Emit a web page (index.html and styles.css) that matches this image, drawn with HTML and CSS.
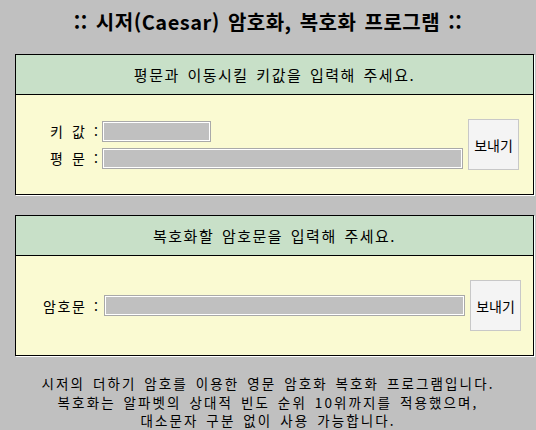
FILE: index.html
```html
<!DOCTYPE html>
<html lang="ko">
<head>
    <meta charset="UTF-8">
    <meta name="viewport" content="width=device-width, initial-scale=1.0">
    <title>시저(Caesar) 암호화, 복호화 프로그램</title>
    <link rel="stylesheet" href="styles.css">
</head>
<body>

    <h1 class="title">:: 시저(Caesar) 암호화, 복호화 프로그램 ::</h1>

    <form class="panel panel-encrypt">
        <div class="panel-head">평문과 이동시킬 키값을 입력해 주세요.</div>
        <div class="panel-body">
            <div class="fields">
                <label class="field"><span class="label">키 값 :</span><input class="input input-short" type="text"></label>
                <label class="field"><span class="label">평 문 :</span><input class="input input-long" type="text"></label>
            </div>
            <button class="send" type="button">보내기</button>
        </div>
    </form>

    <form class="panel panel-decrypt">
        <div class="panel-head">복호화할 암호문을 입력해 주세요.</div>
        <div class="panel-body">
            <div class="fields">
                <label class="field"><span class="label">암호문 :</span><input class="input input-long" type="text"></label>
            </div>
            <button class="send" type="button">보내기</button>
        </div>
    </form>

    <p class="note">
        시저의 더하기 암호를 이용한 영문 암호화 복호화 프로그램입니다.<br>
        복호화는 알파벳의 상대적 빈도 순위 10위까지를 적용했으며,<br>
        대소문자 구분 없이 사용 가능합니다.
    </p>

</body>
</html>
```

FILE: styles.css
```css
body {
    margin: 0;
    background-color: #c0c0c0;
    color: #000;
    font-family: "Noto Sans CJK KR", "Noto Sans", sans-serif;
    font-size: 14px;
    letter-spacing: 1.8px;
    word-spacing: 2px;
}
.title {
    margin: 0;
    height: 54px;
    line-height: 44px;
    text-align: center;
    font-size: 20px;
    font-weight: bold;
    letter-spacing: 0.5px;
}
.panel {
    box-sizing: border-box;
    width: 519px;
    margin: 0 0 0 15px;
    border: 1px solid #000;
    box-shadow: 1px 1px 0 #fff;
}
.panel + .panel {
    margin-top: 20px;
}
.panel-head {
    height: 39px;
    display: flex;
    align-items: center;
    justify-content: center;
    background-color: #c8e0c8;
    border-bottom: 1px solid #000;
    font-size: 15px;
    letter-spacing: 1.5px;
}
.panel-body {
    height: 99px;
    display: flex;
    align-items: center;
    background-color: #fafad2;
}
.panel-encrypt .panel-body {
    padding-left: 34px;
}
.panel-decrypt .panel-body {
    padding-left: 27px;
}
.fields {
    display: flex;
    flex-direction: column;
    gap: 6px;
}
.field {
    display: flex;
    align-items: center;
}
.label {
    margin-right: 4px;
    white-space: nowrap;
    letter-spacing: 1.6px;
}
.panel-encrypt .label {
    width: 48px;
}
.panel-decrypt .label {
    width: 57px;
}
.input {
    box-sizing: border-box;
    height: 21px;
    margin: 0;
    padding: 0 3px;
    background-color: #c0c0c0;
    border: 1px solid #a9a9a9;
    box-shadow: inset 0 0 0 1px #fff;
}
.input-short {
    width: 109px;
}
.input-long {
    width: 361px;
}
.send {
    box-sizing: border-box;
    width: 51px;
    height: 51px;
    margin-left: 5px;
    padding: 0;
    background-color: #f4f4f4;
    border: 1px solid #c8c8c8;
    font-family: inherit;
    font-size: 14px;
    letter-spacing: 0;
    word-spacing: 0;
    color: #000;
}
.note {
    margin: 18px 0 0;
    text-align: center;
    font-size: 13.5px;
    line-height: 18.5px;
    letter-spacing: 2.1px;
}
```
